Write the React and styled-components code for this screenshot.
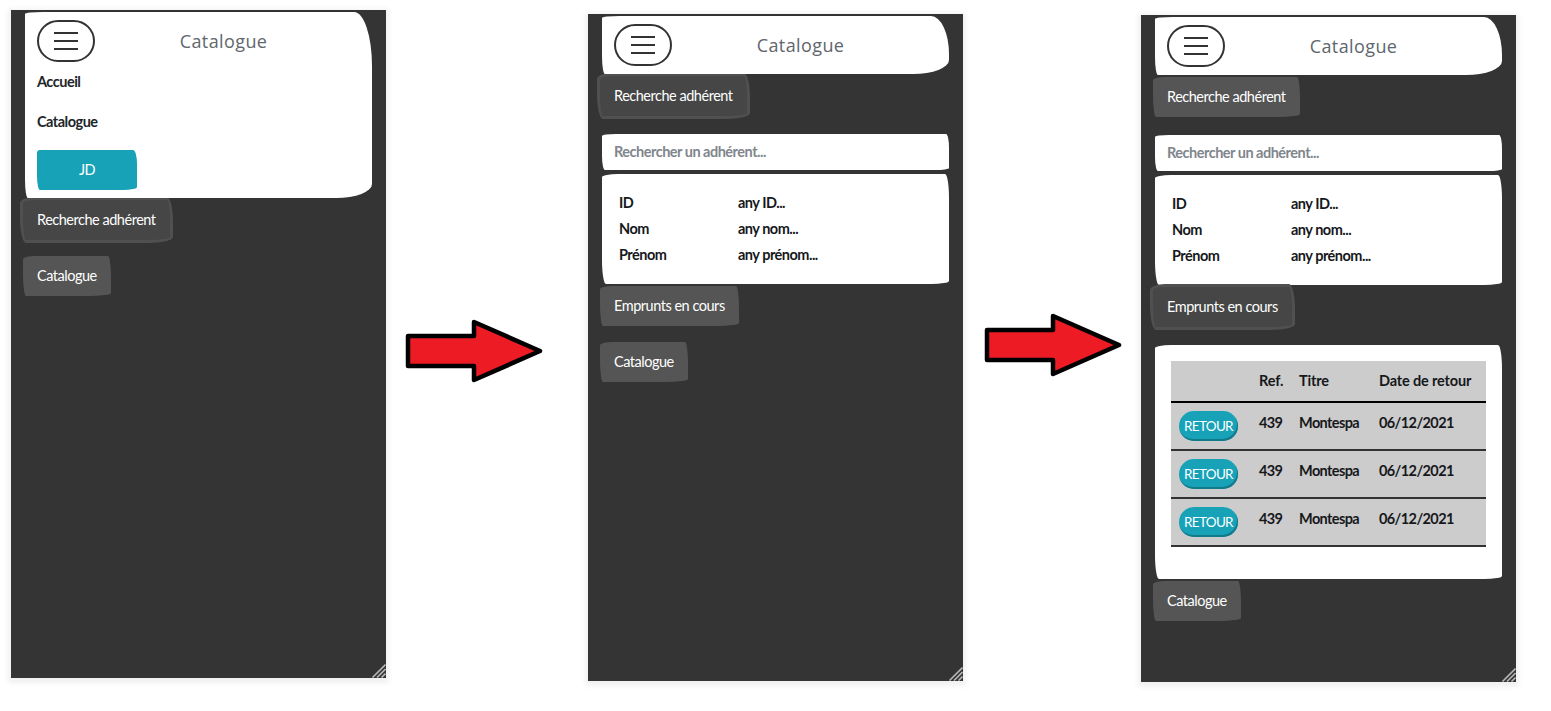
import React from "react";
import styled, { createGlobalStyle } from "styled-components";

const GlobalStyle = createGlobalStyle`
  html, body {
    margin: 0;
    padding: 0;
    background: #fff;
  }
  body {
    font-family: "Lato", sans-serif;
    font-size: 14.5px;
    letter-spacing: -0.48px;
    color: #212529;
  }
`;

const Stage = styled.div`
  display: flex;
  align-items: flex-start;
  width: 1551px;
  height: 711px;
  overflow: hidden;
`;

const Phone = styled.div`
  position: relative;
  flex: none;
  box-sizing: border-box;
  width: 375px;
  height: ${(props) => props.$height}px;
  margin: ${(props) => props.$top}px 0 0 ${(props) => props.$left}px;
  padding: 2px 14px 0 12px;
  background: #343434;
  box-shadow: 0 2px 5px 3px rgba(0, 0, 0, 0.06);
`;

const ResizeGrip = styled.svg`
  position: absolute;
  right: 0;
  bottom: 0;
  width: 15px;
  height: 15px;
`;

const Header = styled.header`
  position: relative;
  z-index: 1;
  box-sizing: border-box;
  margin-left: 2px;
  padding: 8px 12px;
  background: #fff;
  border-radius: 18px 18px 36px 3px / 2px ${(props) => (props.$open ? "54px" : "38px")} 14px 18px;
`;

const HeaderRow = styled.div`
  display: flex;
  align-items: center;
`;

const Toggler = styled.button`
  flex: none;
  display: flex;
  align-items: center;
  justify-content: center;
  box-sizing: border-box;
  width: 58px;
  height: 42px;
  padding: 0;
  background: none;
  border: 2px solid #333;
  border-radius: 21px;
`;

const Brand = styled.div`
  flex: 1;
  padding-right: 8px;
  text-align: center;
  font-family: "Open Sans", sans-serif;
  font-size: 18px;
  font-weight: 500;
  line-height: 24px;
  letter-spacing: 0.4px;
  color: #60666c;
`;

const NavLink = styled.a`
  display: block;
  padding: 8px 0;
  line-height: 24px;
  font-weight: 700;
  letter-spacing: -0.5px;
  color: #212529;
`;

const UserButton = styled.button`
  display: block;
  box-sizing: border-box;
  width: 100px;
  height: 40px;
  margin-top: 8px;
  padding: 0 0 2px;
  background: #17a2b8;
  border: 0;
  border-radius: 3px 4px 14px 3px / 3px 14px 3px 14px;
  color: #fff;
  font: inherit;
  letter-spacing: inherit;
`;

const SectionButton = styled.button`
  display: block;
  box-sizing: border-box;
  height: 40px;
  margin: 2px 0 16px;
  padding: 0 14px 2px;
  background: ${(props) => (props.$focused ? "#464646" : "#555")};
  border: 0;
  border-radius: 12px 3px 22px 3px / 3px 22px 3px 22px;
  box-shadow: ${(props) => (props.$focused ? "0 0 0 3px #505050" : "none")};
  color: #fff;
  font: inherit;
  letter-spacing: inherit;
`;

const Search = styled.div`
  box-sizing: border-box;
  height: 36px;
  margin: 18px 0 0 2px;
  padding: 0 12px;
  background: #fff;
  border-radius: 14px 3px 14px 3px / 2px 14px 2px 14px;
  font-weight: 700;
  line-height: 36px;
  letter-spacing: -0.5px;
  color: #80868c;
`;

const Card = styled.section`
  box-sizing: border-box;
  margin-left: 2px;
  background: #fff;
  border-radius: 16px 4px 18px 4px / 3px 24px 3px 24px;
`;

const InfoCard = styled(Card)`
  display: grid;
  grid-template-columns: 119px 1fr;
  grid-auto-rows: 26px;
  align-items: center;
  margin-top: 4px;
  padding: 15px 17px 17px;
  font-weight: 700;
  letter-spacing: -0.5px;
  color: #16181b;
`;

const LoansCard = styled(Card)`
  height: 234px;
  margin-top: 18px;
  padding: 16px;
`;

const LoansTable = styled.table`
  width: 315px;
  table-layout: fixed;
  border-collapse: collapse;
  background: #ccc;
  letter-spacing: -0.6px;
  color: #16181b;
`;

const HeadCell = styled.th`
  box-sizing: border-box;
  width: ${(props) => props.$width}px;
  padding: 8px;
  border-bottom: 2px solid #000;
  font-weight: 700;
  line-height: 24px;
  letter-spacing: -0.15px;
  text-align: left;
`;

const Cell = styled.td`
  padding: 8px;
  border-bottom: 2px solid #333;
  font-weight: 700;
  line-height: 24px;
  vertical-align: top;
`;

const ReturnButton = styled.button`
  display: block;
  box-sizing: border-box;
  width: 59px;
  height: 30px;
  padding: 0;
  background: #17a2b8;
  border: 0;
  border-radius: 15px;
  box-shadow: inset -1px -2px 0 #117a8b;
  color: #fff;
  font: inherit;
  font-size: 13.5px;
  font-weight: 400;
  letter-spacing: -0.7px;
`;

const ArrowBox = styled.svg`
  flex: none;
  display: block;
  width: 141px;
  height: 64px;
  margin: ${(props) => props.$top}px 0 0 ${(props) => props.$left}px;
`;

const MenuIcon = () => (
  <svg width="24" height="20" viewBox="0 0 24 20" aria-hidden="true">
    <path d="M0 2h24M0 10h24M0 18h24" stroke="#333" strokeWidth="2" fill="none" />
  </svg>
);

const Grip = () => (
  <ResizeGrip viewBox="0 0 15 15" aria-hidden="true">
    <path
      d="M1.5 14.5L14.5 1.5M6 14.5L14.5 6M10.5 14.5L14.5 10.5"
      stroke="#b5b5b5"
      strokeWidth="1.6"
      fill="none"
    />
  </ResizeGrip>
);

const Arrow = ({ top, left }) => (
  <ArrowBox $top={top} $left={left} viewBox="0 0 141 64" aria-hidden="true">
    <path
      d="M3 17H69V3L135 32L69 61V47H3Z"
      fill="#ed1c24"
      stroke="#000"
      strokeWidth="4.5"
      strokeLinejoin="round"
    />
  </ArrowBox>
);

const Navbar = ({ open }) => (
  <Header $open={open}>
    <HeaderRow>
      <Toggler aria-label="Menu">
        <MenuIcon />
      </Toggler>
      <Brand>Catalogue</Brand>
    </HeaderRow>
    {open && (
      <nav>
        <NavLink>Accueil</NavLink>
        <NavLink>Catalogue</NavLink>
        <UserButton>JD</UserButton>
      </nav>
    )}
  </Header>
);

const MemberSearch = () => (
  <>
    <Search>Rechercher un adhérent...</Search>
    <InfoCard>
      <span>ID</span>
      <span>any ID...</span>
      <span>Nom</span>
      <span>any nom...</span>
      <span>Prénom</span>
      <span>any prénom...</span>
    </InfoCard>
  </>
);

const loans = [
  { ref: 439, title: "Montespa", date: "06/12/2021" },
  { ref: 439, title: "Montespa", date: "06/12/2021" },
  { ref: 439, title: "Montespa", date: "06/12/2021" },
];

const Loans = () => (
  <LoansCard>
    <LoansTable>
      <thead>
        <tr>
          <HeadCell $width={80} />
          <HeadCell $width={40}>Ref.</HeadCell>
          <HeadCell $width={80}>Titre</HeadCell>
          <HeadCell $width={115}>Date de retour</HeadCell>
        </tr>
      </thead>
      <tbody>
        {loans.map((loan, index) => (
          <tr key={index}>
            <Cell>
              <ReturnButton>RETOUR</ReturnButton>
            </Cell>
            <Cell>{loan.ref}</Cell>
            <Cell>{loan.title}</Cell>
            <Cell>{loan.date}</Cell>
          </tr>
        ))}
      </tbody>
    </LoansTable>
  </LoansCard>
);

const App = () => {
  return (
    <Stage>
      <GlobalStyle />
      <Phone $top={10} $left={11} $height={668}>
        <Navbar open />
        <SectionButton $focused>Recherche adhérent</SectionButton>
        <SectionButton>Catalogue</SectionButton>
        <Grip />
      </Phone>
      <Arrow top={319} left={19} />
      <Phone $top={14} $left={42} $height={667}>
        <Navbar />
        <SectionButton $focused>Recherche adhérent</SectionButton>
        <MemberSearch />
        <SectionButton>Emprunts en cours</SectionButton>
        <SectionButton>Catalogue</SectionButton>
        <Grip />
      </Phone>
      <Arrow top={313} left={21} />
      <Phone $top={15} $left={16} $height={667}>
        <Navbar />
        <SectionButton>Recherche adhérent</SectionButton>
        <MemberSearch />
        <SectionButton $focused>Emprunts en cours</SectionButton>
        <Loans />
        <SectionButton>Catalogue</SectionButton>
        <Grip />
      </Phone>
    </Stage>
  );
};

export default App;
